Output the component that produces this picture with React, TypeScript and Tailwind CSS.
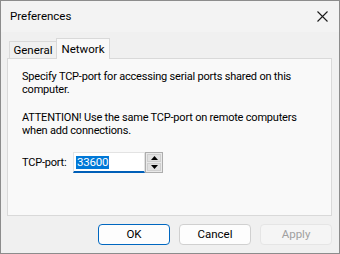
import React from 'react';

const font = { fontFamily: 'Roboto, "Liberation Sans", Arial, sans-serif' };

function TitleBar() {
  return (
    <div className="h-[31px] flex items-center justify-between pl-[9px] pr-[10px] bg-[#f3f3f3]">
      <span className="text-[11.5px] text-black">Preferences</span>
      <svg width="11" height="11" viewBox="0 0 11 11" className="mr-[1px]">
        <path d="M0.5 0.5 L10.5 10.5 M10.5 0.5 L0.5 10.5" stroke="#1a1a1a" strokeWidth="1.1" />
      </svg>
    </div>
  );
}

function Tabs() {
  return (
    <div className="flex items-end h-[20px] pl-[2px] relative z-10">
      <div className="h-[17px] w-[48px] border border-b-0 border-[#d9d9d9] bg-[#f0f0f0] text-[11.5px] flex items-center justify-center pt-[1px]">
        General
      </div>
      <div className="h-[21px] -mb-px w-[54px] border border-b-0 border-[#d9d9d9] bg-[#f9f9f9] text-[11.5px] flex items-start justify-center pt-[2px] -ml-px">
        Network
      </div>
    </div>
  );
}

function PortInput() {
  return (
    <div className="flex items-center">
      <div className="w-[72px] h-[21px] bg-white border border-[#e3e3e3] border-b-2 border-b-[#005fb8] flex items-center pl-[2px]">
        <span className="bg-[#0078d7] text-white text-[11.5px] leading-[13px] px-[1px]">33600</span>
      </div>
      <div className="flex flex-col w-[18px] h-[21px] border border-[#adadad] bg-[#e9e9e9] p-[1px] gap-[1px]">
        <div className="flex-1 bg-[#e1e1e1] border border-[#cfcfcf] flex items-center justify-center">
          <svg width="7" height="4" viewBox="0 0 7 4"><path d="M3.5 0 L7 4 L0 4 Z" fill="#000" /></svg>
        </div>
        <div className="flex-1 bg-[#e1e1e1] border border-[#cfcfcf] flex items-center justify-center">
          <svg width="7" height="4" viewBox="0 0 7 4"><path d="M0 0 L7 0 L3.5 4 Z" fill="#000" /></svg>
        </div>
      </div>
    </div>
  );
}

function Button({ label, kind }: { label: string; kind: 'default' | 'normal' | 'disabled' }) {
  const cls =
    kind === 'default'
      ? 'border-[#0067c0] bg-[#fdfdfd] text-black'
      : kind === 'normal'
      ? 'border-[#d0d0d0] bg-[#fdfdfd] text-black'
      : 'border-[#e5e5e5] bg-[#f5f5f5] text-[#a0a0a0]';
  return (
    <div className={`w-[72px] h-[21px] rounded-[4px] border text-[11.5px] flex items-center justify-center ${cls}`}>
      {label}
    </div>
  );
}

export default function App() {
  return (
    <div style={font} className="w-[340px] h-[254px] border border-[#8c8c8c] flex flex-col bg-[#f0f0f0] text-black">
      <TitleBar />
      <div className="flex-1 flex flex-col pl-[6px] pr-[7px] pt-[6px]">
        <Tabs />
        <div className="h-[158px] border border-[#d9d9d9] bg-[#f9f9f9] pl-[14px] pt-[11px] text-[11px] leading-[13px] tracking-[-0.2px] whitespace-nowrap">
          <p>Specify TCP-port for accessing serial ports shared on this<br />computer.</p>
          <p className="mt-[15px]">ATTENTION! Use the same TCP-port on remote computers<br />when add connections.</p>
          <div className="flex items-center mt-[15px]">
            <span className="w-[51px]">TCP-port:</span>
            <PortInput />
          </div>
        </div>
        <div className="flex justify-end gap-[9px] mt-[8px]">
          <Button label="OK" kind="default" />
          <Button label="Cancel" kind="normal" />
          <Button label="Apply" kind="disabled" />
        </div>
      </div>
    </div>
  );
}
